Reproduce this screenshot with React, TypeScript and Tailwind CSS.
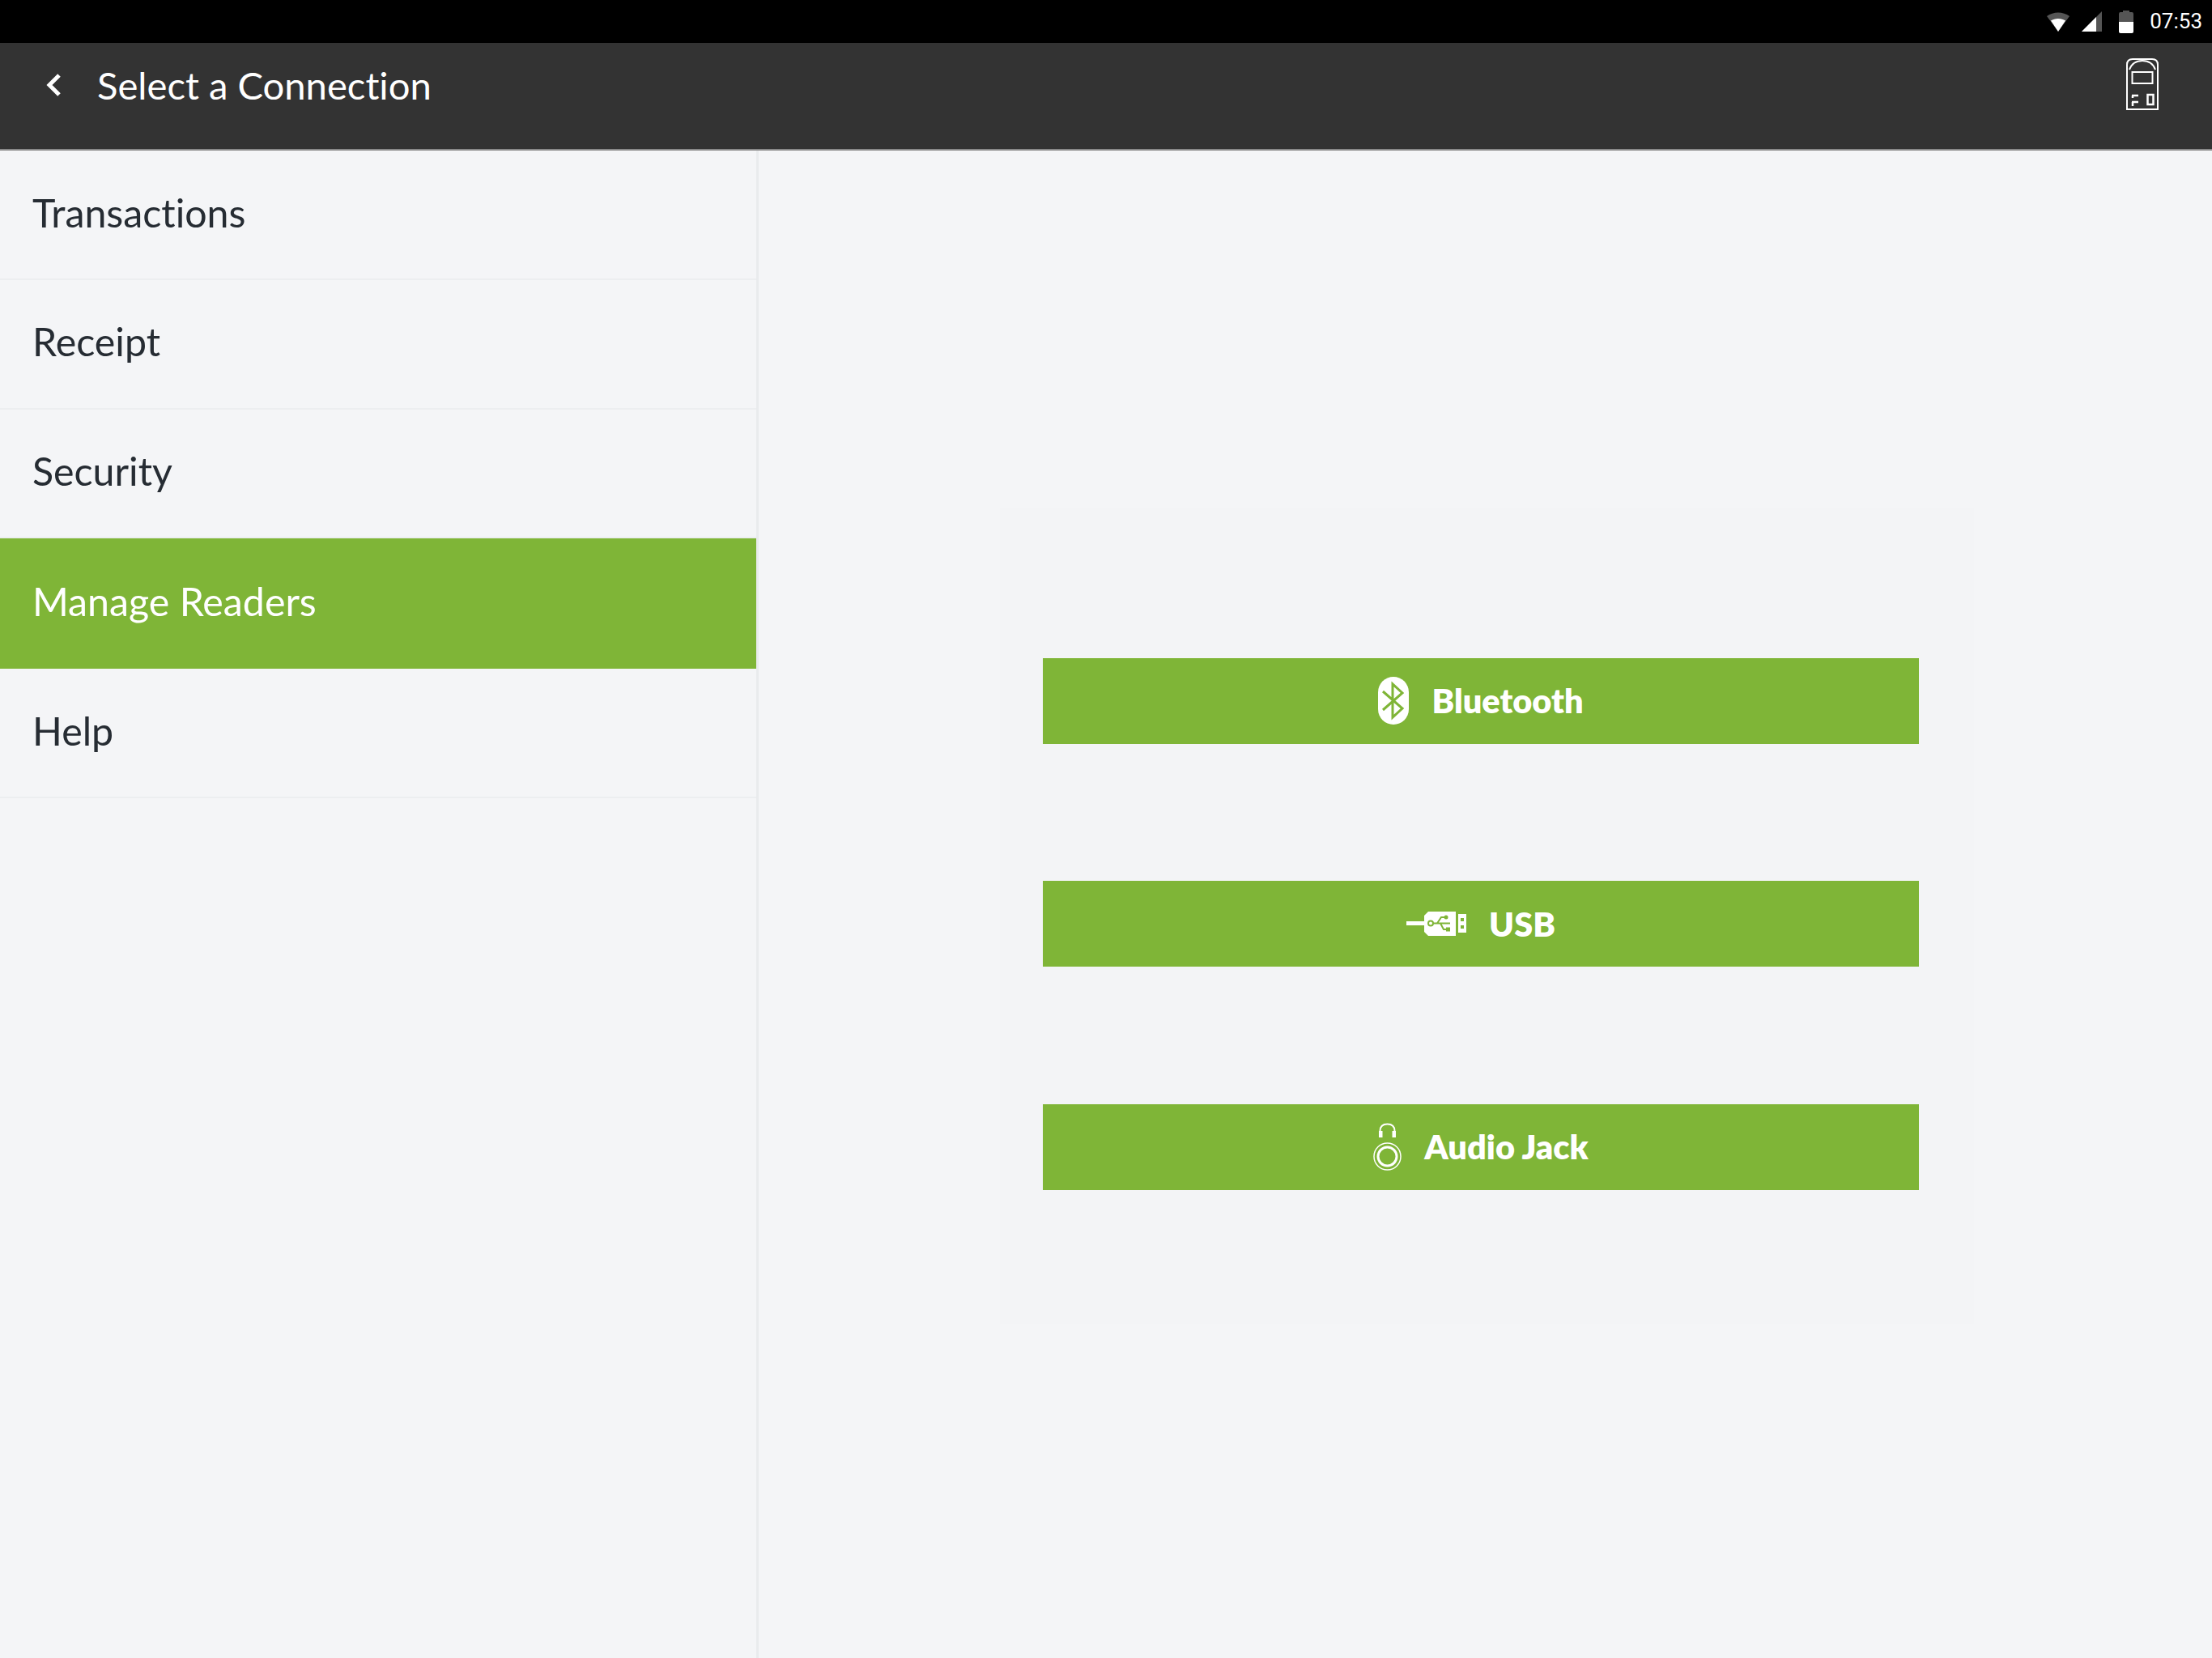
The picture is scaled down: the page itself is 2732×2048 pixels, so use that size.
import React from 'react';

function WifiIcon() {
  return (
    <svg width="28" height="24" viewBox="0 0 28 24">
      <path d="M0 5 C8 -1 20 -1 28 5 L14 24 Z" fill="#555" />
      <path d="M5 10.500 C10 7 18 7 23 10.500 L14 24 Z" fill="#fff" />
    </svg>
  );
}

function SignalIcon() {
  return (
    <svg width="25" height="25" viewBox="0 0 25 25">
      <path d="M0 25 L25 0 V25 Z" fill="#555" />
      <path d="M0 25 L18 7 V25 Z" fill="#fff" />
    </svg>
  );
}

function BatteryIcon() {
  return (
    <svg width="18" height="28" viewBox="0 0 18 28">
      <path d="M5 0 H13 V2 H16 Q18 2 18 4 V14 H0 V4 Q0 2 2 2 H5 Z" fill="#555" />
      <path d="M0 14 H18 V26 Q18 28 16 28 H2 Q0 28 0 26 Z" fill="#fff" />
    </svg>
  );
}

function ReaderIcon() {
  return (
    <svg width="40" height="64" viewBox="0 0 40 64" fill="none" stroke="#fff" strokeWidth="2">
      <path d="M1 63 V8 Q1 1 8 1 H32 Q39 1 39 8 V63 Z" />
      <path d="M4 14 Q8 3 20 3 Q32 3 36 14" />
      <rect x="7.500" y="17" width="25" height="14" />
      <path d="M7 46 H15 M8 46 V49 M7 54 H15 M8 54 V59" strokeWidth="2.500" />
      <rect x="26.500" y="45" width="7" height="12" strokeWidth="2.500" />
    </svg>
  );
}

function BluetoothIcon() {
  return (
    <svg width="38" height="59" viewBox="0 0 38 59">
      <rect x="0" y="0" width="38" height="59" rx="19" fill="#fff" />
      <path d="M6 18 L30 39 L18 50 V9 L30 20 L6 41" fill="none" stroke="#7fb537" strokeWidth="3" />
    </svg>
  );
}

function UsbIcon() {
  return (
    <svg width="74" height="32" viewBox="0 0 74 32">
      <rect x="0" y="13" width="22" height="5" fill="#fff" />
      <path d="M27 1 H61 V31 H27 L22 26 V6 Z" fill="#fff" />
      <path d="M64 4 H74 V27 H64 Z M67 9 V13 H71 V9 Z M67 18 V22 H71 V18 Z" fill="#fff" fillRule="evenodd" />
      <circle cx="30" cy="15.500" r="3" fill="none" stroke="#7fb537" strokeWidth="2" />
      <path d="M33 15.500 H54 M38 15.500 L43 8 H48 M42 15.500 L46 23 H51" fill="none" stroke="#7fb537" strokeWidth="2" />
      <circle cx="49" cy="8" r="2.500" fill="#7fb537" />
      <rect x="49" y="20.500" width="5" height="5" fill="#7fb537" />
    </svg>
  );
}

function AudioIcon() {
  return (
    <svg width="35" height="59" viewBox="0 0 35 59" fill="none" stroke="#fff">
      <path d="M8.500 12 V10 Q8.500 1.500 17.500 1.500 Q26.500 1.500 26.500 10 V12" strokeWidth="2" />
      <rect x="7" y="10" width="4.500" height="8" fill="#fff" strokeWidth="0" />
      <rect x="23.500" y="10" width="4.500" height="8" fill="#fff" strokeWidth="0" />
      <circle cx="17.500" cy="41.500" r="16.500" strokeWidth="1.500" />
      <circle cx="17.500" cy="41.500" r="11.500" strokeWidth="3" />
    </svg>
  );
}

const menuItems = ['Transactions', 'Receipt', 'Security', 'Manage Readers', 'Help'];

const connections = [
  { label: 'Bluetooth', icon: BluetoothIcon, gap: 'gap-[28px]' },
  { label: 'USB', icon: UsbIcon, gap: 'gap-[28px]' },
  { label: 'Audio Jack', icon: AudioIcon, gap: 'gap-[28px]' },
];

export default function App() {
  return (
    <div className="w-[2732px] h-[2048px] flex flex-col overflow-hidden bg-[#f4f5f7] font-['Lato',sans-serif] [font-variant-ligatures:none]">
      {/* Status bar */}
      <div className="h-[53px] bg-black flex items-center justify-end pr-[12px] shrink-0">
        <WifiIcon />
        <div className="ml-[15px]"><SignalIcon /></div>
        <div className="ml-[21px]"><BatteryIcon /></div>
        <span className="ml-[20px] text-[26px] text-white font-['Roboto',sans-serif]">07:53</span>
      </div>

      {/* Header */}
      <div className="h-[133px] bg-[#333333] border-b-2 border-[#8a8a8a] flex items-start justify-between shrink-0 pl-[57px] pr-[66px]">
        <div className="flex items-center h-[104px]">
          <svg width="18" height="28" viewBox="0 0 18 28" fill="none" stroke="#fff" strokeWidth="5">
            <path d="M16 2 L4 14 L16 26" />
          </svg>
          <span className="ml-[45px] text-[47.2px] text-white">Select a Connection</span>
        </div>
        <div className="mt-[19px]"><ReaderIcon /></div>
      </div>

      <div className="flex flex-1 min-h-0">
        {/* Sidebar */}
        <div className="w-[937px] shrink-0 border-r-[3px] border-[#e9ebed]">
          {menuItems.map((item) => (
            <div
              key={item}
              className={
                item === 'Manage Readers'
                  ? 'h-[161px] pl-[40px] pb-[7px] flex items-center bg-[#7fb537] text-white text-[48.3px]'
                  : 'h-[159.8px] pl-[40px] pb-[6px] flex items-center border-b-2 border-[#eceef0] text-[#262c33] text-[48.3px]'
              }
            >
              {item}
            </div>
          ))}
        </div>

        {/* Connection options */}
        <div className="flex-1 pl-[298px] pt-[442px]">
          <div className="w-[1203px] h-[1007px] bg-[#f3f4f6] pl-[53px] pt-[184.500px]">
            <div className="w-[1082px] flex flex-col gap-[169.500px]">
              {connections.map((c) => (
                <div
                  key={c.label}
                  className={`h-[106px] bg-[#7fb537] flex items-center justify-center text-white font-extrabold text-[41.500px] ${c.gap}`}
                >
                  <c.icon />
                  <span>{c.label}</span>
                </div>
              ))}
            </div>
          </div>
        </div>
      </div>
    </div>
  );
}
